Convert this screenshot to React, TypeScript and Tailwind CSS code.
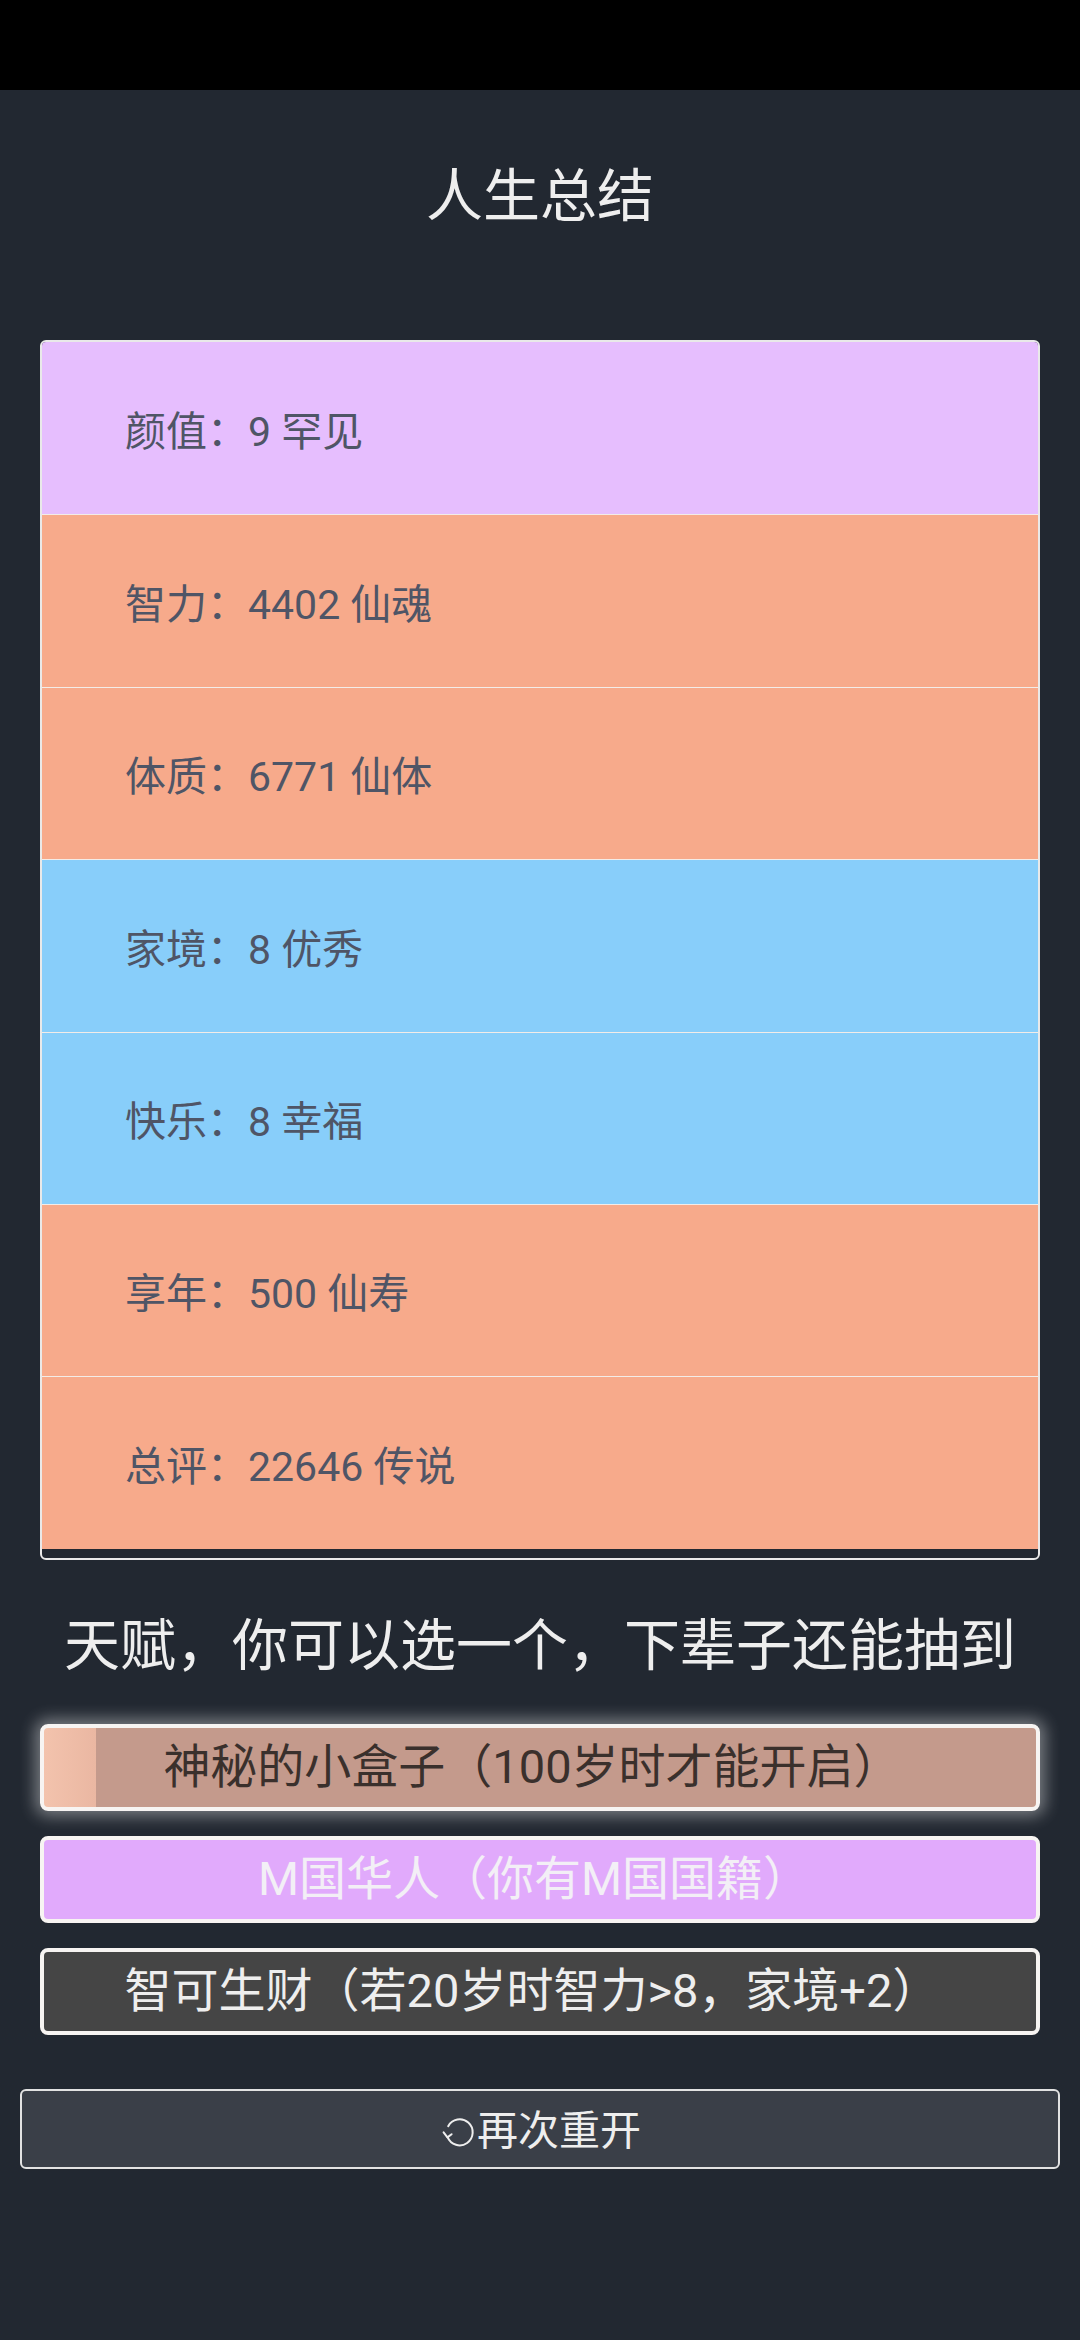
import React from "react";

const rows: { label: string; bg: string }[] = [
  { label: "颜值：9 罕见", bg: "bg-[#e6befe]" },
  { label: "智力：4402 仙魂", bg: "bg-[#f7aa8b]" },
  { label: "体质：6771 仙体", bg: "bg-[#f7aa8b]" },
  { label: "家境：8 优秀", bg: "bg-[#88cefa]" },
  { label: "快乐：8 幸福", bg: "bg-[#88cefa]" },
  { label: "享年：500 仙寿", bg: "bg-[#f7aa8b]" },
  { label: "总评：22646 传说", bg: "bg-[#f7aa8b]" },
];

function RestartIcon() {
  return (
    <svg width="36" height="32" viewBox="0 0 36 32" fill="none" className="mr-[2px]">
      <path
        d="M9.2 10.2 A13 13 0 1 1 8.6 21.2"
        stroke="#eeeeee"
        strokeWidth="2"
        strokeLinecap="round"
        fill="none"
      />
      <path
        d="M4.6 16.4 L8.4 21.4 L12.6 18.2"
        stroke="#eeeeee"
        strokeWidth="2"
        strokeLinecap="round"
        strokeLinejoin="round"
        fill="none"
      />
    </svg>
  );
}

export default function App() {
  return (
    <div className="min-h-[2340px] bg-[#222831] font-['Roboto','Noto_Sans_CJK_SC',sans-serif] text-[#eeeeee]">
      <div className="h-[90px] bg-black" />
      <h1 className="mt-[66px] text-center text-[57px] leading-[82px] font-normal text-[#eeeeee]">
        人生总结
      </h1>

      <div className="mx-[40px] mt-[102px] overflow-hidden rounded-[6px] border-2 border-[#e9e9e9] bg-[#222831] pb-[9px]">
        {rows.map((r, i) => (
          <div
            key={i}
            className={`flex h-[172.4px] items-center pl-[83px] pt-[9px] text-[41px] text-[#4f5566] ${r.bg} ${
              i > 0 ? "border-t-[1.5px] border-[#f3ece8]" : ""
            }`}
          >
            {r.label}
          </div>
        ))}
      </div>

      <div className="mt-[44px] text-center text-[56px] leading-[84px] text-[#eeeeee]">
        天赋，你可以选一个，下辈子还能抽到
      </div>

      <div className="mx-[40px] mt-[36px] flex flex-col gap-[25px]">
        <div className="flex h-[87px] items-center justify-center rounded-[8px] border-[4px] border-[#f7f4f2] bg-[linear-gradient(to_right,#f3c3ad_0px,#eab7a2_52px,#c49a8c_52px)] pr-[16px] text-[47px] text-[#3a302c] shadow-[0_0_16px_5px_rgba(255,255,255,0.4)]">
          神秘的小盒子（100岁时才能开启）
        </div>
        <div className="flex h-[87px] items-center justify-center rounded-[8px] border-[4px] border-[#f7f4f2] bg-[#e1aafc] pr-[12px] text-[47px] text-[#f3eff6]">
          M国华人（你有M国国籍）
        </div>
        <div className="flex h-[87px] items-center justify-center rounded-[8px] border-[4px] border-[#f7f4f2] bg-[#454545] pr-[16px] text-[47px] text-[#eeeeee]">
          智可生财（若20岁时智力&gt;8，家境+2）
        </div>
      </div>

      <button className="mx-[20px] mt-[54px] flex h-[80px] w-[1040px] items-center justify-center rounded-[6px] border-2 border-[#e2e2e2] bg-[#3a3f48] pt-[7px] text-[41px] text-[#eeeeee]">
        <RestartIcon />
        再次重开
      </button>
    </div>
  );
}
